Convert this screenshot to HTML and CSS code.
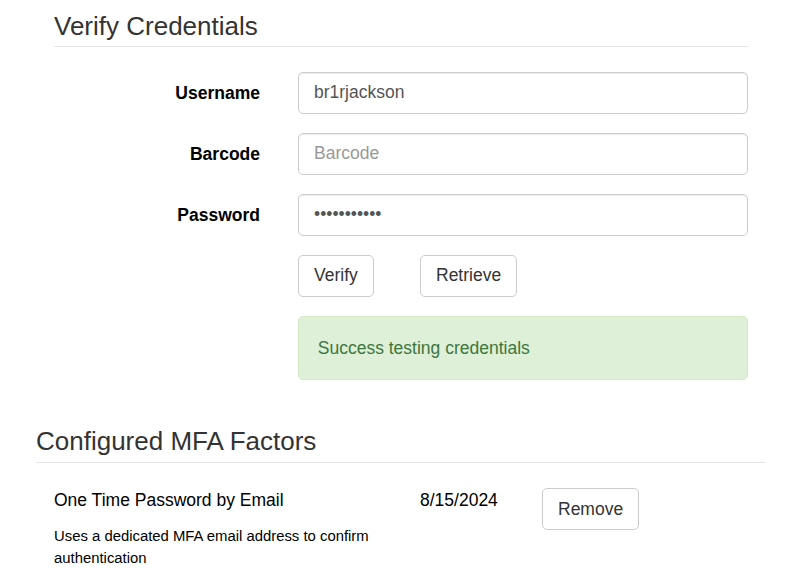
FILE: index.html
```html
<!DOCTYPE html>
<html lang="en">
<head>
<meta charset="utf-8">
<title>Verify Credentials</title>
<link rel="stylesheet" href="styles.css">
</head>
<body>
<div class="page">
  <section class="verify">
    <h2 class="section-title verify-title">Verify Credentials</h2>
    <form class="cred-form">
      <div class="form-row">
        <label class="form-label" for="username">Username</label>
        <div class="form-field"><input class="form-input" id="username" type="text" value="br1rjackson"></div>
      </div>
      <div class="form-row">
        <label class="form-label" for="barcode">Barcode</label>
        <div class="form-field"><input class="form-input" id="barcode" type="text" placeholder="Barcode"></div>
      </div>
      <div class="form-row">
        <label class="form-label" for="password">Password</label>
        <div class="form-field"><input class="form-input" id="password" type="password" value="br1rjackson"></div>
      </div>
      <div class="form-row">
        <div class="form-label"></div>
        <div class="form-field btn-pair">
          <button class="btn" type="button">Verify</button>
          <button class="btn" type="button">Retrieve</button>
        </div>
      </div>
      <div class="form-row last-row">
        <div class="form-label"></div>
        <div class="form-field"><div class="alert-success">Success testing credentials</div></div>
      </div>
    </form>
  </section>
  <section class="mfa">
    <h2 class="section-title mfa-title">Configured MFA Factors</h2>
    <div class="factor-row">
      <div class="factor-info">
        <div class="factor-name">One Time Password by Email</div>
        <p class="factor-desc">Uses a dedicated MFA email address to confirm authentication</p>
      </div>
      <div class="factor-date">8/15/2024</div>
      <div class="factor-action"><button class="btn" type="button">Remove</button></div>
    </div>
  </section>
</div>
</body>
</html>
```

FILE: styles.css
```css
html, body {
  margin: 0;
  padding: 0;
  background: #fff;
}

body {
  font-family: "Liberation Sans", Arial, Helvetica, sans-serif;
  font-size: 17.5px;
  line-height: 25px;
  color: #333;
}

.page {
  width: 729px;
  margin-left: 36px;
}

.verify {
  padding: 0 17px 0 18px;
}

.section-title {
  font-size: 26px;
  font-weight: normal;
  line-height: 28.6px;
  color: #333;
  border-bottom: 1px solid #e5e5e5;
  margin: 0 0 25px;
}

.verify-title {
  margin-top: 12px;
  padding-bottom: 5.4px;
}

.mfa-title {
  margin-top: 46.5px;
  padding-bottom: 6.7px;
}

.cred-form {
  margin: 0;
}

.form-row {
  display: flex;
  column-gap: 38px;
  margin-bottom: 19px;
}

.last-row {
  margin-bottom: 0;
}

.form-label {
  width: 206px;
  flex: 0 0 206px;
  text-align: right;
  font-weight: bold;
  color: #000;
  padding-top: 9px;
  line-height: 25px;
}

.form-field {
  flex: 1 1 auto;
  min-width: 0;
}

.form-input {
  display: block;
  width: 100%;
  height: 42px;
  box-sizing: border-box;
  padding: 7.5px 15px;
  font-family: inherit;
  font-size: 17.5px;
  line-height: 25px;
  color: #555;
  background: #fff;
  border: 1px solid #ccc;
  border-radius: 5px;
  box-shadow: inset 0 1px 1px rgba(0, 0, 0, 0.075);
  outline: none;
}

.form-input::placeholder {
  color: #999;
}

.btn-pair {
  display: grid;
  grid-template-columns: 122px auto;
  justify-items: start;
}

.btn {
  display: inline-block;
  box-sizing: border-box;
  height: 42px;
  padding: 7.5px 15px;
  font-family: inherit;
  font-size: 17.5px;
  line-height: 25px;
  color: #333;
  background: #fff;
  border: 1px solid #ccc;
  border-radius: 5px;
  cursor: pointer;
}

.alert-success {
  box-sizing: border-box;
  padding: 18.75px 18.75px;
  line-height: 25px;
  color: #3c763d;
  background: #dff0d8;
  border: 1px solid #d6e9c6;
  border-radius: 5px;
}

.factor-row {
  display: grid;
  grid-template-columns: 328px 84px auto;
  column-gap: 38px;
  padding-left: 18px;
  align-items: start;
}

.factor-name {
  color: #000;
  line-height: 25px;
}

.factor-desc {
  margin: 11.5px 0 0;
  font-size: 14.875px;
  line-height: 22px;
  color: #000;
}

.factor-date {
  color: #000;
  line-height: 25px;
}

.factor-action {
  justify-self: start;
}
```
